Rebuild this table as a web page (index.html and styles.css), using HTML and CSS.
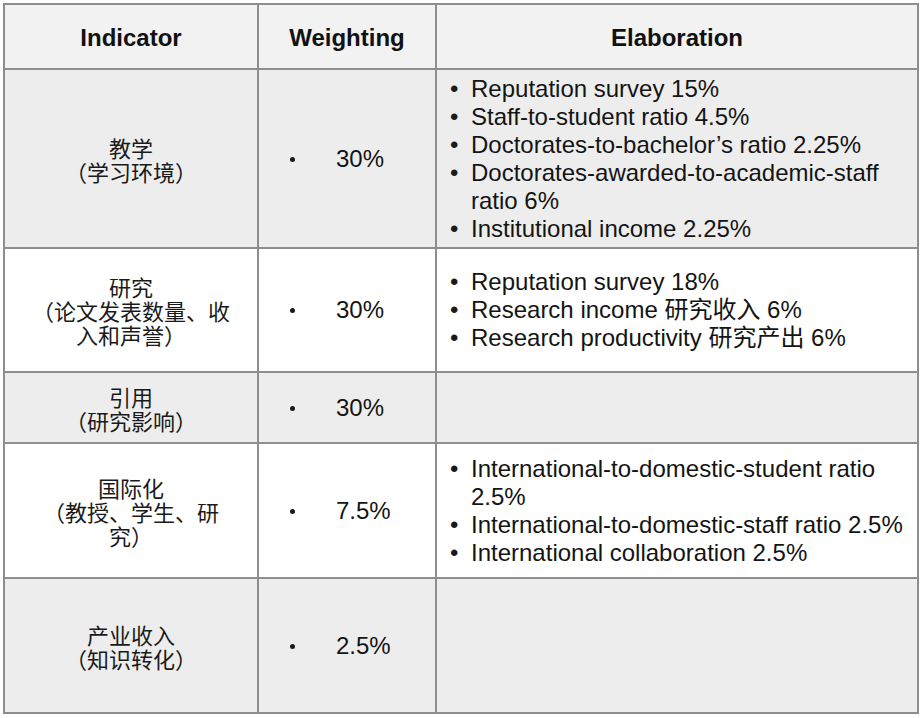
FILE: index.html
```html
<!DOCTYPE html>
<html lang="zh">
<head>
<meta charset="utf-8">
<title>Indicator table</title>
<link rel="stylesheet" href="styles.css">
</head>
<body>
<table class="grid">
  <colgroup>
    <col class="c-ind">
    <col class="c-wt">
    <col class="c-el">
  </colgroup>
  <thead>
    <tr class="head">
      <th>Indicator</th>
      <th>Weighting</th>
      <th>Elaboration</th>
    </tr>
  </thead>
  <tbody>
    <tr class="r1 gray">
      <td class="ind">教学<br>（学习环境）</td>
      <td class="wt"><span class="dot"></span><span>30%</span></td>
      <td class="el">
        <ul>
          <li>Reputation survey 15%</li>
          <li>Staff-to-student ratio 4.5%</li>
          <li>Doctorates-to-bachelor’s ratio 2.25%</li>
          <li>Doctorates-awarded-to-academic-staff ratio 6%</li>
          <li>Institutional income 2.25%</li>
        </ul>
      </td>
    </tr>
    <tr class="r2">
      <td class="ind">研究<br>（论文发表数量、收入和声誉）</td>
      <td class="wt"><span class="dot"></span><span>30%</span></td>
      <td class="el">
        <ul>
          <li>Reputation survey 18%</li>
          <li>Research income 研究收入 6%</li>
          <li>Research productivity 研究产出 6%</li>
        </ul>
      </td>
    </tr>
    <tr class="r3 gray">
      <td class="ind">引用<br>（研究影响）</td>
      <td class="wt"><span class="dot"></span><span>30%</span></td>
      <td class="el"></td>
    </tr>
    <tr class="r4">
      <td class="ind">国际化<br>（教授、学生、研究）</td>
      <td class="wt"><span class="dot"></span><span>7.5%</span></td>
      <td class="el">
        <ul>
          <li>International-to-domestic-student ratio 2.5%</li>
          <li>International-to-domestic-staff ratio 2.5%</li>
          <li>International collaboration 2.5%</li>
        </ul>
      </td>
    </tr>
    <tr class="r5 gray">
      <td class="ind">产业收入<br>（知识转化）</td>
      <td class="wt"><span class="dot"></span><span>2.5%</span></td>
      <td class="el"></td>
    </tr>
  </tbody>
</table>
</body>
</html>
```

FILE: styles.css
```css
html, body {
  margin: 0;
  padding: 0;
  background: #ffffff;
}

body {
  padding: 3px 0 0 3px;
  font-family: "Liberation Sans", "Noto Sans CJK SC", sans-serif;
  color: #141414;
  text-spacing-trim: space-all;
}

.grid {
  border-collapse: collapse;
  width: 914px;
  table-layout: fixed;
  border: 2px solid #8e8e8e;
}

.c-ind { width: 254px; }
.c-wt { width: 178px; }
.c-el { width: 482px; }

.grid th,
.grid td {
  border: 2px solid #8e8e8e;
  padding: 0;
  vertical-align: middle;
}

.head {
  height: 65px;
  background: #f2f2f2;
}

.head th {
  font-size: 24px;
  font-weight: bold;
  text-align: center;
  color: #111;
  padding-top: 3px;
}

.gray { background: #ededed; }

.r1 { height: 179px; }
.r2 { height: 124px; }
.r3 { height: 71px; }
.r4 { height: 135px; }
.r5 { height: 135px; }

.ind {
  font-family: "Noto Sans CJK SC", "Liberation Sans", sans-serif;
  font-size: 22px;
  line-height: 24px;
  text-align: center;
  padding: 0 20px !important;
  color: #1a1a1a;
  text-spacing-trim: space-all;
}

.wt {
  font-size: 24px;
}

.wt .dot {
  display: inline-block;
  width: 5px;
  height: 5px;
  border-radius: 50%;
  background: #1a1a1a;
  margin-left: 31px;
  margin-right: 41px;
  vertical-align: middle;
  position: relative;
  top: -1px;
}

.el {
  font-size: 24px;
  line-height: 28px;
  padding: 4px 8px 4px 13px !important;
}

.el ul {
  list-style: none;
  margin: 0;
  padding: 0;
}

.el li {
  display: grid;
  grid-template-columns: 21px 1fr;
}

.el li::before {
  content: "•";
  color: #1a1a1a;
}
```
